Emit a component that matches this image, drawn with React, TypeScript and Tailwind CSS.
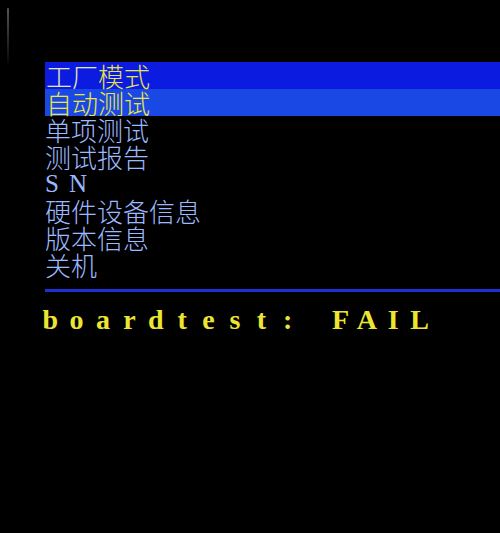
import React from "react";

const cjk = { fontFamily: '"Noto Sans CJK SC", "Noto Sans", sans-serif' };
const serif = { fontFamily: '"Liberation Serif", "DejaVu Serif", serif' };

const plainItems = ["单项测试", "测试报告"];
const lowerItems = ["硬件设备信息", "版本信息", "关机"];

function Spaced({ text, className }: { text: string; className: string }) {
  return (
    <div className={"flex " + className} style={serif}>
      {text.split("").map((c, i) => (
        <span key={i} className="inline-block w-[26.4px] shrink-0 text-center">
          {c === " " ? "\u00a0" : c}
        </span>
      ))}
    </div>
  );
}

export default function App() {
  return (
    <div className="w-[500px] h-[533px] bg-black overflow-hidden relative">
      <div className="absolute left-[7px] top-[8px] w-[2px] h-[60px] bg-gradient-to-b from-[#555] to-transparent rounded" />
      <div className="pt-[62px] pl-[45px]">
        <div className="text-[26px] leading-[27px] font-light" style={cjk}>
          <div className="h-[27px] bg-[#0b1be0] pl-[1px] whitespace-nowrap">
            <span className="text-[#e6e6c0]">工厂</span>
            <span className="text-[#e6e24a]">模式</span>
          </div>
          <div className="h-[27px] bg-[#1a48e4] pl-[1px] text-[#ece63c] whitespace-nowrap">
            自动测试
          </div>
          {plainItems.map((t) => (
            <div key={t} className="h-[27px] text-[#9cb8ff] whitespace-nowrap">
              {t}
            </div>
          ))}
          <div className="h-[27px] text-[#9cb8ff] flex items-center gap-[10px] text-[25px]" style={serif}>
            <span>S</span>
            <span>N</span>
          </div>
          {lowerItems.map((t) => (
            <div key={t} className="h-[27px] text-[#9cb8ff] whitespace-nowrap">
              {t}
            </div>
          ))}
        </div>
        <div className="mt-[11px] h-[3px] bg-[#1f2fd6]" />
        <Spaced
          text="boardtest: FAIL"
          className="mt-[13px] -ml-[8px] text-[28px] leading-[30px] font-bold text-[#ece632]"
        />
      </div>
    </div>
  );
}
